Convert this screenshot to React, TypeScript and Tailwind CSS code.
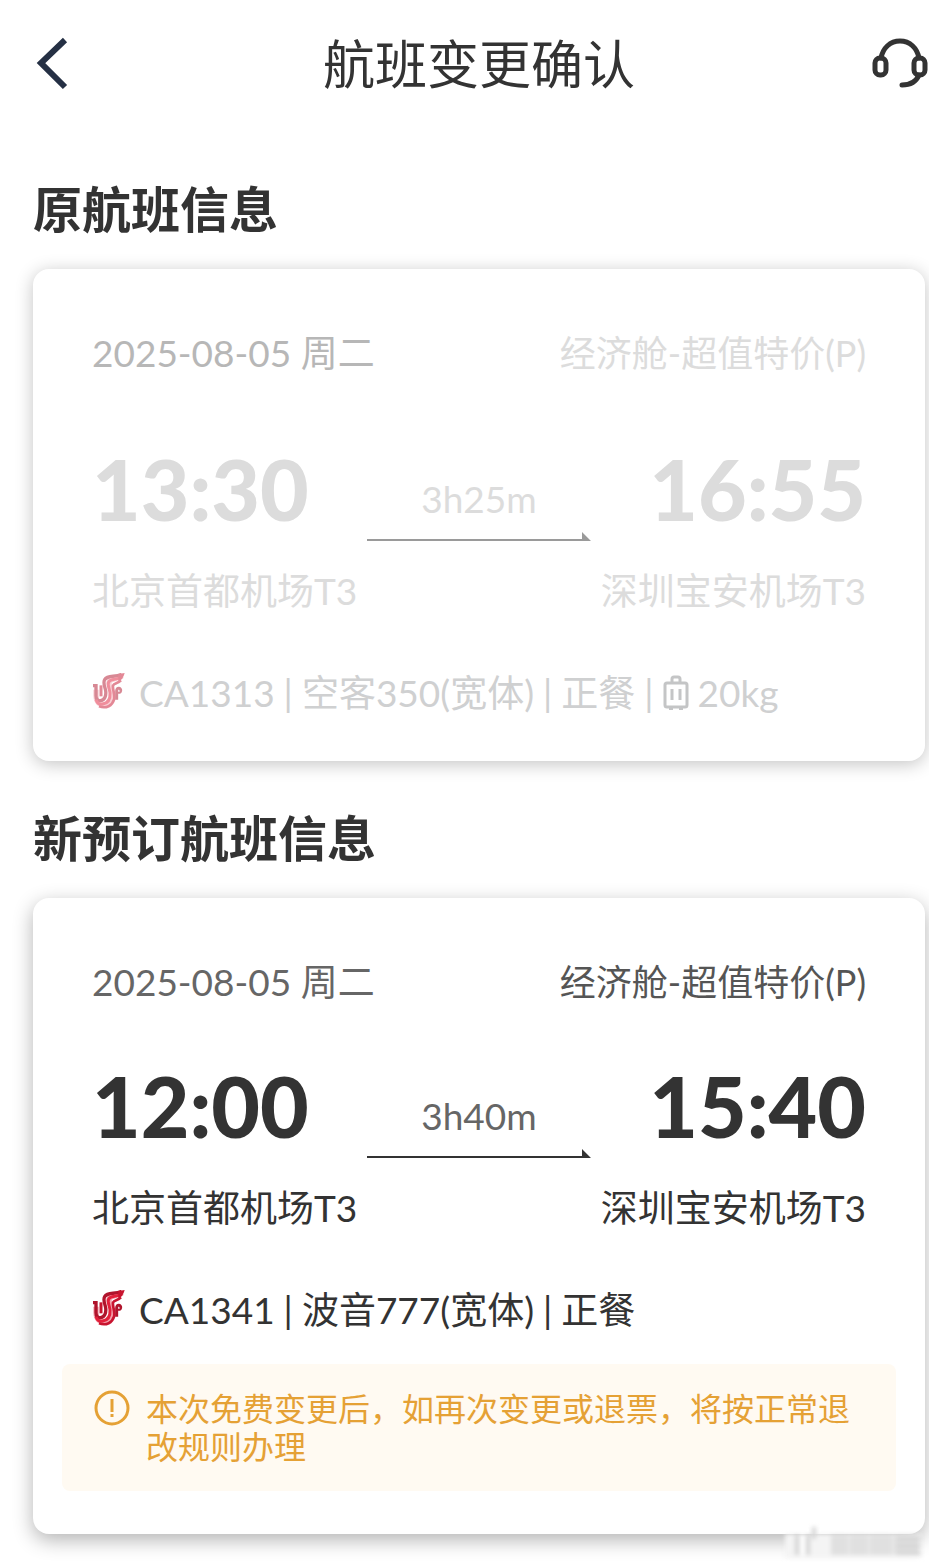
import { clsx } from "clsx";

type Flight = {
  title: string;
  date: string;
  cabin: string;
  depart: string;
  arrive: string;
  duration: string;
  from: string;
  to: string;
  details: string[];
  baggage?: string;
  notice?: string;
  muted?: boolean;
};

const flights: Flight[] = [
  {
    title: "原航班信息",
    date: "2025-08-05 周二",
    cabin: "经济舱-超值特价(P)",
    depart: "13:30",
    arrive: "16:55",
    duration: "3h25m",
    from: "北京首都机场T3",
    to: "深圳宝安机场T3",
    details: ["CA1313", "空客350(宽体)", "正餐"],
    baggage: "20kg",
    muted: true,
  },
  {
    title: "新预订航班信息",
    date: "2025-08-05 周二",
    cabin: "经济舱-超值特价(P)",
    depart: "12:00",
    arrive: "15:40",
    duration: "3h40m",
    from: "北京首都机场T3",
    to: "深圳宝安机场T3",
    details: ["CA1341", "波音777(宽体)", "正餐"],
    notice: "本次免费变更后，如再次变更或退票，将按正常退改规则办理",
  },
];

function HeadsetIcon() {
  return (
    <svg width="57" height="52" viewBox="0 0 57 52" fill="none" stroke="#333333" strokeLinecap="round" aria-hidden>
      <path d="M9 20C11 10 18 3 28 3s17 7 19 17" strokeWidth="5" />
      <rect x="3" y="20" width="11" height="17" rx="5" strokeWidth="5" />
      <rect x="42" y="20" width="11" height="17" rx="5" strokeWidth="5" />
      <path d="M47 37C44 44 38 47 30 47" strokeWidth="5" />
    </svg>
  );
}

function AirlineLogo({ muted }: { muted?: boolean }) {
  return (
    <svg
      width="33"
      height="36"
      viewBox="0 0 97 108"
      fill="none"
      className={clsx("mb-1 shrink-0", muted && "opacity-50")}
      aria-hidden
    >
      <path
        d="M11 50V68C12 88 22 97 36 95C56 92 62 76 58 56C54 42 44 30 54 22C62 16 74 18 90 8"
        stroke="#f3a3ae"
        strokeWidth="16"
      />
      <path
        d="M2 38H11V68C11 77 15 83 24 83C37 83 42 68 40 53C38 42 31 30 37 20C46 5 68 14 88 4"
        stroke="#b0142c"
        strokeWidth="10"
      />
      <path d="M26 37V70" stroke="#c8142f" strokeWidth="9" />
      <path d="M11 80C15 91 23 95 32 93C47 90 54 77 53 60C52 46 44 36 49 27C56 15 72 23 88 12" stroke="#e3203b" strokeWidth="9" />
      <path d="M20 100C42 108 60 98 65 80C69 66 60 48 62 38C64 30 76 32 86 22" stroke="#c8142f" strokeWidth="8" />
      <path d="M73 80V54C73 42 86 44 85 53C84 59 80 59 79 56" stroke="#b0142c" strokeWidth="9" />
      <path d="M78 3L97 0C94 11 88 21 78 28z" fill="#c8142f" />
    </svg>
  );
}

function SuitcaseIcon() {
  return (
    <svg width="26" height="36" viewBox="0 0 26 36" fill="none" stroke="#c4c5c6" strokeWidth="3" aria-hidden>
      <rect x="2" y="8" width="22" height="24" rx="2" />
      <path d="M9 7V4a2 2 0 0 1 2-2h4a2 2 0 0 1 2 2V7" />
      <path d="M9 14v11M17 14v11" />
      <path d="M6 34h4M16 34h4" strokeWidth="2" />
    </svg>
  );
}

function NoticeIcon() {
  return (
    <svg width="36" height="36" viewBox="0 0 36 36" fill="none" stroke="#e5a135" className="shrink-0" aria-hidden>
      <circle cx="18" cy="18" r="16" strokeWidth="3" />
      <path d="M18 9v13M18 24v3" strokeWidth="3" />
    </svg>
  );
}

function RouteArrow({ muted }: { muted?: boolean }) {
  return (
    <svg
      viewBox="0 0 224 10"
      className={clsx("mt-2 h-[10px] w-full", muted ? "text-[#9a9a9a]" : "text-[#333333]")}
      fill="currentColor"
      aria-hidden
    >
      <path d="M0 8h215V1l9 9H0z" />
    </svg>
  );
}

function FlightSection({ flight }: { flight: Flight }) {
  const { muted } = flight;
  return (
    <section className="pt-[45px]">
      <h2 className="text-[49px] leading-[64px] font-bold">{flight.title}</h2>
      <div
        className={clsx(
          "mt-7 rounded-2xl bg-white pt-[60px]",
          muted
            ? "pb-11 text-[#dcdcdc] shadow-[0_3px_18px_rgba(0,0,0,0.24)]"
            : "pb-[43px] shadow-[0_6px_20px_rgba(0,0,0,0.3)]"
        )}
      >
        <div className="flex items-center justify-between px-[59px] leading-[48px]">
          <span className={clsx("text-[37px]", muted ? "text-[#b7b7b7]" : "text-[#666666]")}>{flight.date}</span>
          <span className={clsx("text-[36px]", !muted && "text-[#555555]")}>{flight.cabin}</span>
        </div>

        <div className={clsx("grid grid-cols-[1fr_224px_1fr] px-[59px]", muted ? "mt-16" : "mt-[52px]")}>
          <div className="whitespace-nowrap">
            <div className="text-[84px] leading-[96px] font-black">{flight.depart}</div>
            <div className="mt-[30px] text-[37px] leading-[48px]">{flight.from}</div>
          </div>
          <div className="pt-[34px] text-center">
            <div className={clsx("text-[37px] leading-[48px]", !muted && "text-[#666666]")}>{flight.duration}</div>
            <RouteArrow muted={muted} />
          </div>
          <div className="text-right whitespace-nowrap">
            <div className="text-[84px] leading-[96px] font-black">{flight.arrive}</div>
            <div className="mt-[30px] text-[37px] leading-[48px]">{flight.to}</div>
          </div>
        </div>

        <div
          className={clsx(
            "mt-[54px] flex items-center px-[59px] text-[37px] leading-[48px] whitespace-nowrap",
            muted && "text-[#cfd0d1]"
          )}
        >
          <AirlineLogo muted={muted} />
          <div className="ml-[14px] flex items-center gap-[9px]">
            {flight.details.map((text, i) => (
              <span key={text} className="flex gap-[9px]">
                {i > 0 && <span>|</span>}
                {text}
              </span>
            ))}
            {flight.baggage && (
              <span className="flex items-center gap-[9px]">
                <span>|</span>
                <SuitcaseIcon />
                {flight.baggage}
              </span>
            )}
          </div>
        </div>

        {flight.notice && (
          <div className="mx-[29px] mt-[30px] flex gap-4 rounded-lg bg-[#fffaf2] px-8 pt-[26px] pb-[25px] text-[#e5a135]">
            <NoticeIcon />
            <p className="text-[32px] leading-[38px]">{flight.notice}</p>
          </div>
        )}
      </div>
    </section>
  );
}

// Smudged stamp over the lower right corner of the page
function Stamp() {
  return (
    <svg
      width="140"
      height="34"
      viewBox="0 0 140 34"
      className="pointer-events-none absolute right-1 bottom-1 blur-[2px]"
      aria-hidden
    >
      <rect x="0" y="9" width="136" height="24" fill="#f4f4f4" />
      <path d="M12 10v20M23 10v20M29 2v12" stroke="#d4d4d4" strokeWidth="4" />
      <path d="M18 10v20" stroke="#ffffff" strokeWidth="4" />
      <rect x="46" y="10" width="88" height="20" fill="#e0e0e0" />
      <path d="M64 10v20M84 10v20M108 10v20" stroke="#e8e8e8" strokeWidth="3" />
      <path d="M112 14h24M112 21h24M112 28h24" stroke="#cccccc" strokeWidth="2" />
    </svg>
  );
}

export default function App() {
  return (
    <div className="relative overflow-hidden bg-white pb-[29px] font-['Lato','Noto_Sans_CJK_SC',sans-serif] text-[#333333]">
      <header className="flex h-32 items-center pl-[33px]">
        <button type="button" aria-label="返回" className="w-[53px] shrink-0">
          <svg width="40" height="54" viewBox="0 0 40 54" fill="none" stroke="#253044" strokeWidth="6" aria-hidden>
            <path d="M32 3L8 26l24 24" />
          </svg>
        </button>
        <h1 className="flex-1 text-center text-[52px] leading-[64px]">航班变更确认</h1>
        <button type="button" aria-label="联系客服" className="w-[57px] shrink-0">
          <HeadsetIcon />
        </button>
      </header>
      <main className="pt-1 pr-1 pl-[33px]">
        {flights.map((flight) => (
          <FlightSection key={flight.title} flight={flight} />
        ))}
      </main>
      <Stamp />
    </div>
  );
}
